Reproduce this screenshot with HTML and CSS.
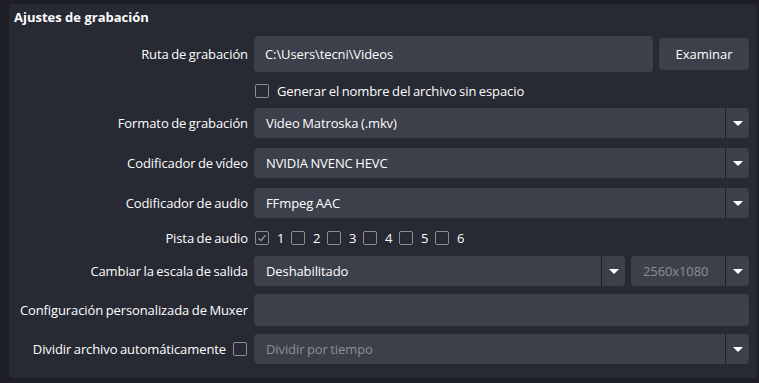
FILE: index.html
```html
<!DOCTYPE html>
<html lang="es">
<head>
<meta charset="utf-8">
<title>Ajustes de grabación</title>
<link rel="stylesheet" href="styles.css">
</head>
<body>
<section class="panel">
  <h2 class="title">Ajustes de grabación</h2>
  <div class="row row-path">
    <label class="label">Ruta de grabación</label>
    <div class="field-group">
      <div class="lineedit tall">C:\Users\tecni\Videos</div>
      <button class="btn">Examinar</button>
    </div>
  </div>
  <div class="row row-check">
    <span class="label"></span>
    <label class="check-item"><span class="box"></span>Generar el nombre del archivo sin espacio</label>
  </div>
  <div class="row row-combo">
    <label class="label">Formato de grabación</label>
    <div class="combo"><span class="combo-text">Video Matroska (.mkv)</span><span class="arrow"></span></div>
  </div>
  <div class="row row-combo">
    <label class="label">Codificador de vídeo</label>
    <div class="combo"><span class="combo-text">NVIDIA NVENC HEVC</span><span class="arrow"></span></div>
  </div>
  <div class="row row-combo">
    <label class="label">Codificador de audio</label>
    <div class="combo"><span class="combo-text">FFmpeg AAC</span><span class="arrow"></span></div>
  </div>
  <div class="row row-tracks">
    <label class="label">Pista de audio</label>
    <div class="tracks">
      <label class="track"><span class="box checked"><svg viewBox="0 0 14 14" width="14" height="14"><path d="M3.5 7.2 L6 9.6 L10.6 4.2" fill="none" stroke="#9a9ca3" stroke-width="1.3"/></svg></span>1</label>
      <label class="track"><span class="box"></span>2</label>
      <label class="track"><span class="box"></span>3</label>
      <label class="track"><span class="box"></span>4</label>
      <label class="track"><span class="box"></span>5</label>
      <label class="track"><span class="box"></span>6</label>
    </div>
  </div>
  <div class="row row-scale">
    <label class="label">Cambiar la escala de salida</label>
    <div class="field-group">
      <div class="combo grow"><span class="combo-text">Deshabilitado</span><span class="arrow"></span></div>
      <div class="combo res disabled"><span class="combo-text">2560x1080</span><span class="arrow"></span></div>
    </div>
  </div>
  <div class="row row-muxer">
    <label class="label">Configuración personalizada de Muxer</label>
    <div class="lineedit muxer"></div>
  </div>
  <div class="row row-split">
    <label class="label label-check">Dividir archivo automáticamente <span class="box"></span></label>
    <div class="combo"><span class="combo-text placeholder">Dividir por tiempo</span><span class="arrow"></span></div>
  </div>
</section>
</body>
</html>
```

FILE: styles.css
```css
* { box-sizing: border-box; }
html, body { margin: 0; padding: 0; }
body {
  background: #1e1f26;
  font-family: "Open Sans", "Noto Sans", sans-serif;
  font-size: 13px;
  color: #fefefe;
  width: 759px;
  height: 383px;
  overflow: hidden;
  padding: 4px 2px 0 9px;
}
.panel {
  background: #272a33;
  border-radius: 4px;
  height: 374px;
  padding: 0 8px 10px 0;
  display: flex;
  flex-direction: column;
}
.title {
  margin: 0;
  padding-left: 5px;
  height: 26px;
  line-height: 27px;
  font-size: 13px;
  font-weight: 700;
}
.row {
  display: flex;
  align-items: center;
  gap: 6px;
  word-spacing: -0.7px;
  letter-spacing: -0.1px;
}
.label {
  flex: 0 0 239px;
  text-align: right;
  white-space: nowrap;
}
.row-path { height: 48px; }
.row-check { height: 25px; }
.row-combo { height: 40px; }
.row-tracks { height: 29px; }
.row-scale { height: 38px; }
.row-muxer { height: 40px; }
.row-split { height: 38px; }

.field-group { flex: 1; display: flex; gap: 6px; align-items: center; }
.lineedit {
  flex: 1;
  background: #3c404b;
  border-radius: 4px;
  height: 32px;
  padding: 0 11px;
  display: flex;
  align-items: center;
}
.lineedit.tall { height: 36px; }
.btn {
  flex: 0 0 90px;
  height: 32px;
  border: 0;
  border-radius: 4px;
  background: #3c404b;
  color: #fefefe;
  font: inherit;
  padding: 0;
}
.combo {
  flex: 1;
  display: flex;
  align-items: center;
  height: 30px;
  background: #3c404b;
  border-radius: 4px;
}
.combo.res { flex: 0 0 118px; }
.combo-text { flex: 1; padding-left: 12px; white-space: nowrap; }
.combo.disabled .combo-text { color: #8b8e96; }
.placeholder { color: #8b8e96; }
.arrow {
  flex: 0 0 24px;
  height: 100%;
  border-left: 1px solid #1f2128;
  display: flex;
  align-items: center;
  justify-content: center;
}
.arrow::after {
  content: "";
  width: 0;
  height: 0;
  border-left: 5px solid transparent;
  border-right: 5px solid transparent;
  border-top: 5px solid #fefefe;
  margin-top: 1px;
}
.box {
  display: inline-block;
  width: 14px;
  height: 14px;
  border: 1px solid #8a8d95;
  border-radius: 2px;
  flex: 0 0 14px;
  position: relative;
}
.box svg { position: absolute; left: -1px; top: -1px; }
.check-item {
  display: flex;
  align-items: center;
  gap: 8px;
  padding-left: 1px;
}
.tracks { display: flex; align-items: center; padding-left: 1px; }
.track {
  display: flex;
  align-items: center;
  gap: 8px;
  width: 36px;
}
.label-check {
  display: flex;
  justify-content: flex-end;
  align-items: center;
  gap: 7px;
  padding-right: 1px;
}
```
